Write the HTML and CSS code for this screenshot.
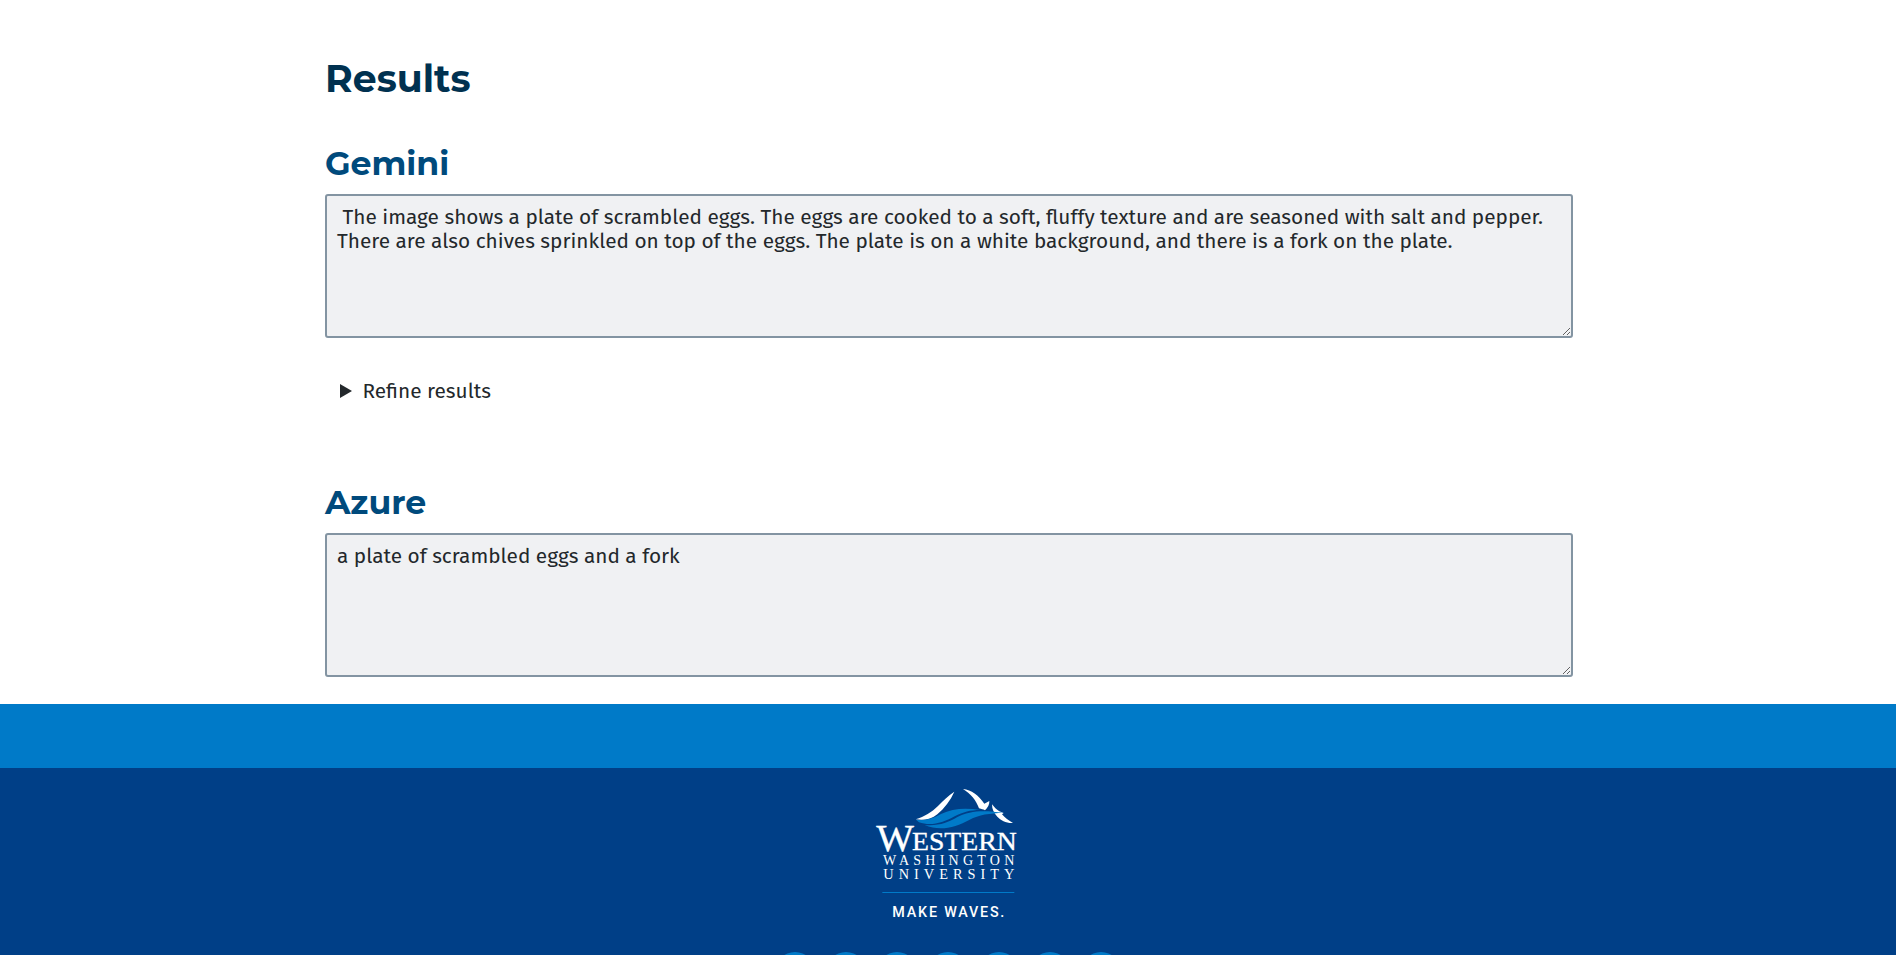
FILE: index.html
```html
<!DOCTYPE html>
<html lang="en">
<head>
<meta charset="utf-8">
<title>Results</title>
<link rel="stylesheet" href="styles.css">
</head>
<body>
<main class="content">
  <h2 class="results-title">Results</h2>
  <section class="result">
    <h3 class="result-title gemini">Gemini</h3>
    <textarea class="result-text long" readonly spellcheck="false"> The image shows a plate of scrambled eggs. The eggs are cooked to a soft, fluffy texture and are seasoned with salt and pepper.
There are also chives sprinkled on top of the eggs. The plate is on a white background, and there is a fork on the plate.</textarea>
    <div class="refine">
      <svg class="marker" viewBox="0 0 12 14"><path d="M0 0 12 7 0 14z"/></svg>
      <span class="refine-label">Refine results</span>
    </div>
  </section>
  <section class="result">
    <h3 class="result-title azure">Azure</h3>
    <textarea class="result-text short" readonly spellcheck="false">a plate of scrambled eggs and a fork</textarea>
  </section>
</main>
<div class="band"></div>
<footer class="footer">
  <svg class="logo" viewBox="0 0 525 450" role="img" aria-label="Western Washington University">
    <g fill="#fff">
      <path d="M283 35C266 46 250 62 234 78C214 98 194 109 167 118C191 122 214 118 232 103C254 84 271 62 283 35Z"/>
      <path d="M309 27C334 29 356 46 373 71L388 63C389 73 383 84 375 91C369 88 365 87 357 85C349 61 333 42 309 27Z"/>
      <path d="M396 73C403 82 409 89 418 94L431 99L426 103C435 114 446 122 459 129C438 130 423 121 412 110C401 99 396 87 396 73Z"/>
    </g>
    <g fill="#007ac8">
      <path d="M168 119C198 123 219 115 243 102C278 84 319 83 361 90C330 90 310 96 284 109C247 130 211 139 177 127Z"/>
      <path d="M194 135C235 139 263 128 291 112C330 91 373 90 431 99C389 99 356 105 329 119C286 143 239 154 194 135Z"/>
    </g>
    <g class="logo-serif">
      <text class="strong" x="49" y="212" font-size="112" textLength="113" lengthAdjust="spacingAndGlyphs">W</text>
      <text class="strong" x="156" y="211" font-size="76" textLength="314" lengthAdjust="spacingAndGlyphs">ESTERN</text>
      <text x="69" y="255" font-size="42" textLength="394">WASHINGTON</text>
      <text x="70" y="297" font-size="43" textLength="393">UNIVERSITY</text>
    </g>
    <path d="M67 337.5H463" stroke="#007ac8" stroke-width="3"/>
    <text class="logo-tag" x="97" y="411" font-size="43" textLength="336">MAKE WAVES.</text>
  </svg>
  <div class="social">
    <i class="dot"></i><i class="dot"></i><i class="dot"></i><i class="dot"></i><i class="dot"></i><i class="dot"></i><i class="dot"></i>
  </div>
</footer>
</body>
</html>
```
FILE: styles.css
```css
* { box-sizing: border-box; }
html { height: 100%; overflow: hidden; }
body {
  margin: 0;
  height: 955px;
  overflow: hidden;
  background: #fff;
  color: #23282b;
  font-family: "Fira Sans", "Noto Sans", sans-serif;
}
.content {
  width: 1248px;
  height: 704px;
  margin: 0 auto;
  padding: 54px 0 0;
  position: relative;
  left: 1px;
}
.results-title, .result-title {
  margin: 0;
  font-family: Montserrat, Inter, sans-serif;
  font-weight: 700;
}
.results-title {
  color: #003150;
  font-size: 37.8px;
  line-height: 48px;
}
.result-title {
  color: #004a7c;
  font-size: 33.2px;
  line-height: 42px;
}
.gemini { margin-top: 40px; }
.result-text {
  display: block;
  width: 1248px;
  height: 144px;
  margin: 10px 0 0;
  padding: 10px;
  border: 2px solid #8394a2;
  border-radius: 3px;
  background: #f0f1f3;
  color: #23282b;
  font: 20.8px/24px "Fira Sans", "Noto Sans", sans-serif;
  outline: none;
  overflow: hidden;
  resize: both;
}
.refine {
  display: flex;
  align-items: center;
  gap: 10.5px;
  height: 30px;
  margin: 38px 0 75px;
  padding-left: 15px;
  font-size: 20.8px;
  line-height: 30px;
}
.refine-label { margin-top: 2px; }
.marker { width: 12px; height: 14px; fill: #23282b; }
.band { height: 64px; background: #007ac8; }
.footer {
  display: flex;
  flex-direction: column;
  align-items: center;
  height: 187px;
  padding-top: 12px;
  background: #003f87;
  overflow: hidden;
}
.logo { width: 175px; height: 150px; flex: none; margin-right: 1px; }
.logo-serif { fill: #fff; font-family: "Liberation Serif", serif; }
.strong { stroke: #fff; stroke-width: 1; }
.logo-tag { fill: #fff; font-family: Roboto, sans-serif; font-weight: 500; }
.social { display: flex; gap: 11px; margin-top: 22px; }
.dot { width: 40px; height: 40px; border-radius: 50%; background: #007ac8; }
```
